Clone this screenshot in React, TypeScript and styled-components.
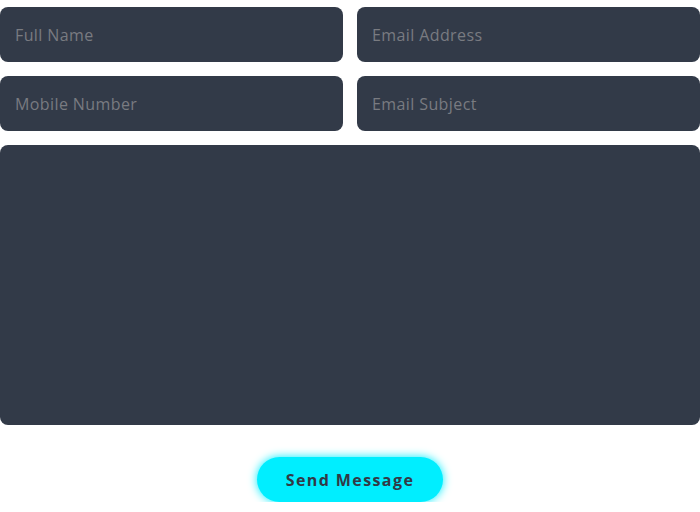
import React from 'react';
import styled, { createGlobalStyle } from 'styled-components';

const GlobalStyle = createGlobalStyle`
  body {
    margin: 0;
    background: #ffffff;
    font-family: 'Open Sans', 'Liberation Sans', sans-serif;
  }
  * {
    box-sizing: border-box;
  }
`;

const Form = styled.form`
  width: 700px;
  padding-top: 7px;
  display: flex;
  flex-direction: column;
  align-items: center;
`;

const Grid = styled.div`
  width: 100%;
  display: grid;
  grid-template-columns: 343px 343px;
  column-gap: 14px;
  row-gap: 14px;
`;

const Input = styled.input`
  height: 55px;
  width: 100%;
  border: none;
  outline: none;
  border-radius: 8px;
  background: #323a48;
  padding: 0 15px;
  font-family: inherit;
  font-size: 16px;
  letter-spacing: 0.4px;
  color: #e4eaec;

  &::placeholder {
    color: #797b81;
  }
`;

const TextArea = styled.textarea`
  grid-column: 1 / 3;
  height: 280px;
  width: 100%;
  border: none;
  outline: none;
  resize: none;
  border-radius: 8px;
  background: #323a48;
  padding: 15px;
  font-family: inherit;
  font-size: 16px;
  color: #e4eaec;
  display: block;
`;

const SendButton = styled.button`
  margin-top: 32px;
  width: 186px;
  height: 45px;
  border: none;
  border-radius: 23px;
  background: #00eeff;
  box-shadow: 0 0 10px #00eeff;
  color: #323946;
  font-family: inherit;
  font-size: 16px;
  font-weight: 700;
  letter-spacing: 1.4px;
  cursor: pointer;
`;

export default function App() {
  return (
    <>
      <GlobalStyle />
      <Form onSubmit={(e) => e.preventDefault()}>
        <Grid>
          <Input type="text" placeholder="Full Name" />
          <Input type="email" placeholder="Email Address" />
          <Input type="number" placeholder="Mobile Number" />
          <Input type="text" placeholder="Email Subject" />
          <TextArea />
        </Grid>
        <SendButton type="submit">Send Message</SendButton>
      </Form>
    </>
  );
}
